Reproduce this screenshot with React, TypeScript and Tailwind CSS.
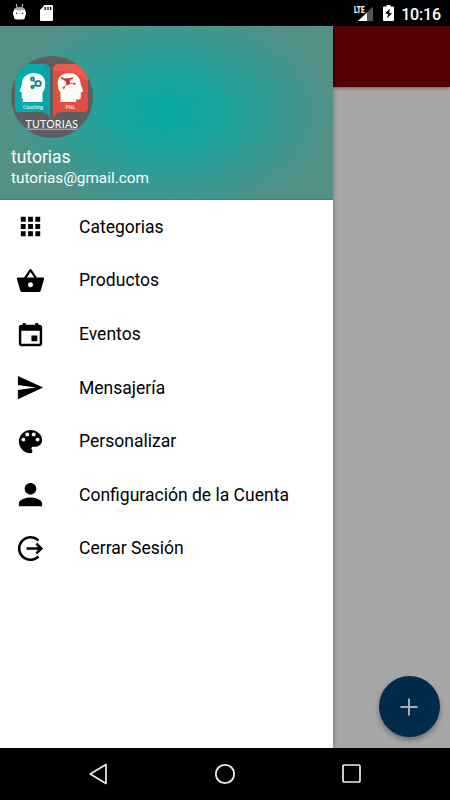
import type { IconType } from 'react-icons'
import {
  IoMdApps,
  IoMdBasket,
  IoMdCalendar,
  IoMdColorPalette,
  IoMdLogOut,
  IoMdPerson,
  IoMdSend,
} from 'react-icons/io'

interface MenuItem {
  label: string
  icon: IconType
}

const items: MenuItem[] = [
  { label: 'Categorias', icon: IoMdApps },
  { label: 'Productos', icon: IoMdBasket },
  { label: 'Eventos', icon: IoMdCalendar },
  { label: 'Mensajería', icon: IoMdSend },
  { label: 'Personalizar', icon: IoMdColorPalette },
  { label: 'Configuración de la Cuenta', icon: IoMdPerson },
  { label: 'Cerrar Sesión', icon: IoMdLogOut },
]

function StatusBar() {
  return (
    <div className="flex h-[26px] shrink-0 items-center justify-between bg-black pl-[13px] pr-[9px] text-white">
      <div className="flex items-center gap-[14px]">
        <svg width="13" height="18" viewBox="0 0 13 18" className="-mt-[2px]">
          <path d="M3.200 1l1 4M9.800 1l-1 4" stroke="#ccc" strokeWidth="1" />
          <path d="M.8 7Q1.500 4 6.500 4t5.700 3z" fill="#aaa" />
          <path d="M0 8.500h.8V6.500Q6.500 8 12.200 6.500v2h.8v3.500l-.8.4V13q0 3.500-3 3.500H3.800q-3 0-3-3.500v-.6L0 12z" fill="#fff" />
          <circle cx="3.700" cy="10.200" r=".7" />
          <circle cx="9.500" cy="10.200" r=".7" />
        </svg>
        <svg width="13" height="16" viewBox="0 0 13 16">
          <path d="M4.500 0H12q1 0 1 1v14q0 1-1 1H1q-1 0-1-1V5z" fill="#fff" />
          <path d="M5.200 2v3M8 2v3M10.700 2v3" stroke="#000" strokeWidth="1.300" />
        </svg>
      </div>
      <div className="flex items-center">
        <svg width="20" height="18" viewBox="0 0 20 18" className="mr-[9px]">
          <path d="M19 2.500V17H4z" fill="#555" />
          <path d="M13 8.500V17H4z" fill="#fff" />
          <text x="0" y="9" textLength="10.500" lengthAdjust="spacingAndGlyphs" fill="#fff" stroke="#000" strokeWidth="1" paintOrder="stroke" className="font-[Roboto] text-[9.500px] font-black">LTE</text>
        </svg>
        <svg width="11" height="16" viewBox="0 0 11 16" className="mr-[7px]">
          <path d="M3.500 0h4v1.500H10q1 0 1 1V15q0 1-1 1H1q-1 0-1-1V2.500q0-1 1-1h2.500z" fill="#fff" />
          <path d="M7.200 3.500L2.200 8.300l3 .8-1.200 4.400 5-5.300-3-.7z" fill="#000" />
        </svg>
        <span className="mt-[3px] text-[16px] font-medium leading-none tracking-[-0.150px]">10:16</span>
      </div>
    </div>
  )
}

function Logo() {
  return (
    <svg width="82" height="82" viewBox="0 0 82 82" className="rounded-full">
      <rect width="82" height="82" fill="#5e5e5f" />
      <path d="M9 8h24q6 0 6 6v49q-2-7-9-7H8q-4 0-4-4V13q0-5 5-5z" fill="#05aaaa" />
      <path d="M30 8h3q6 0 6 6v49q-2-7-9-7z" fill="#0999a8" opacity=".35" />
      <path d="M48 8h24q5 0 5 5v39q0 4-4 4H52q-8 0-10 7V14q0-6 6-6z" fill="#de4f42" />
      <path d="M48 8h24q5 0 5 5v13Q67 13 42 15v-1q0-6 6-6z" fill="#f05a4e" />
      <path d="M34.300 28C34.300 20.500 29.500 17 22.800 17 16 17 11 21 10.800 28.500L8.500 35.500l2.300 1V41q0 2.500 2.500 2.500h-1.500V46H31.500V37q2.800-4 2.800-9z" fill="#fafaf6" />
      <path d="M46.700 28C46.700 20.500 51.500 17 58.200 17 65 17 69.500 21 69.700 28.500L72.300 35.500l-2.500 1V41q0 2.500-2.500 2.500H65V46H49.500V37Q46.700 33 46.700 28z" fill="#fafaf6" />
      <g fill="none" stroke="#16878f" strokeWidth="1.900">
        <circle cx="27.200" cy="27.500" r="2.600" />
        <circle cx="21.500" cy="23" r="1.500" />
        <circle cx="21.500" cy="31" r="1.200" />
        <path d="M22.500 24.500l2.500 2M22.500 30l2.500-1" strokeWidth="1.500" />
      </g>
      <g fill="#c9342f" stroke="#c9342f">
        <path d="M51.500 22.500l5.500 4.500 4-5M57 27l6.500.8M57 27L53 31.500" strokeWidth=".8" />
        <circle cx="57" cy="27" r="1.500" />
        <circle cx="51.200" cy="22.300" r=".8" />
        <circle cx="61" cy="22.300" r=".6" />
        <circle cx="63.700" cy="27.800" r=".6" />
        <circle cx="52.700" cy="31.800" r=".7" />
      </g>
      <g fill="#fff" className="font-[Lato]">
        <text x="12" y="52.500" textLength="20" lengthAdjust="spacingAndGlyphs" className="text-[5px]">Coaching</text>
        <text x="54.500" y="52.500" textLength="9.500" lengthAdjust="spacingAndGlyphs" className="text-[5px]">PNL</text>
        <text x="14.500" y="72" textLength="52.500" className="text-[10.500px]">TUTORIAS</text>
      </g>
      <path d="M14 73.200h54" stroke="#ddd" strokeWidth=".8" />
    </svg>
  )
}

function Drawer() {
  return (
    <aside className="z-10 flex w-[332.500px] shrink-0 flex-col bg-white shadow-[0_0_5px_rgba(0,0,0,0.35)]">
      <header className="h-[174px] border-b border-[#388379] bg-[radial-gradient(ellipse_165px_108px_at_168px_86px,#08aaa6_0%,#18a59f_30%,#359b93_65%,#539087_100%)] pl-[11px] pt-[30px] text-white">
        <Logo />
        <div className="mt-[8px] text-[17.500px] leading-[22px]">tutorias</div>
        <div className="mt-px text-[15.300px] leading-[19px]">tutorias@gmail.com</div>
      </header>
      <nav className="pt-[0.200px]">
        {items.map(({ label, icon: Icon }) => (
          <a key={label} className="flex h-[53.600px] items-center pl-[15px] text-[17.550px] text-black">
            <Icon size={31} />
            <span className="ml-[33px]">{label}</span>
          </a>
        ))}
      </nav>
    </aside>
  )
}

export default function App() {
  return (
    <div className="flex h-[800px] w-[450px] flex-col overflow-hidden bg-black font-[Roboto,sans-serif]">
      <StatusBar />
      <div className="flex h-[721.500px] shrink-0 overflow-hidden bg-[#a6a6a6]">
        <Drawer />
        <main className="flex flex-1 flex-col items-end justify-between">
          <div className="h-[61px] w-full bg-[#530000] shadow-[0_1px_3px_rgba(0,0,0,0.4)]" />
          <button className="mb-[10.500px] mr-[10.500px] flex size-[61px] items-center justify-center rounded-full bg-[#002b4b] shadow-[0_3px_5px_rgba(0,0,0,0.35)]">
            <svg width="18" height="18" viewBox="0 0 18 18">
              <path d="M9 .5v17M.5 9h17" stroke="#b0a9b0" strokeWidth="2" />
            </svg>
          </button>
        </main>
      </div>
      <div className="flex flex-1 items-center justify-between pl-[89px] pr-[89px]">
        <svg width="18" height="22" viewBox="0 0 18 22" fill="none" stroke="#eee" strokeWidth="1.700" strokeLinejoin="round">
          <path d="M17 1.500v19L1.200 11z" />
        </svg>
        <svg width="22" height="22" viewBox="0 0 22 22" fill="none" stroke="#eee" strokeWidth="1.800">
          <circle cx="11" cy="11" r="9.200" />
        </svg>
        <svg width="19" height="19" viewBox="0 0 19 19" fill="none" stroke="#eee" strokeWidth="1.700">
          <rect x="1" y="1" width="17" height="17" rx="1" />
        </svg>
      </div>
    </div>
  )
}
